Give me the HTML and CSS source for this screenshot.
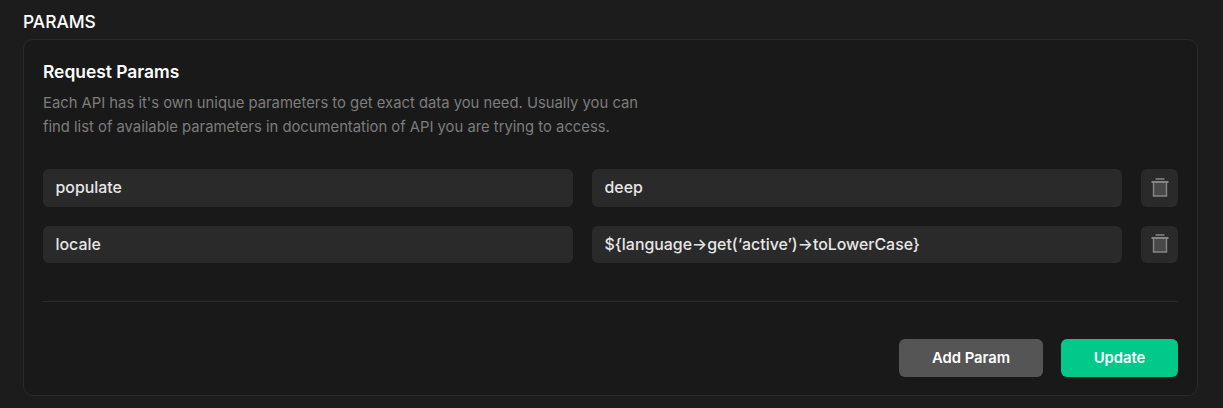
FILE: index.html
```html
<!DOCTYPE html>
<html lang="en">
<head>
<meta charset="utf-8">
<title>Params</title>
<link rel="stylesheet" href="styles.css">
</head>
<body>
<main class="section">
  <h2 class="section-title">PARAMS</h2>
  <section class="card">
    <h3 class="card-title">Request Params</h3>
    <p class="card-desc">Each API has it's own unique parameters to get exact data you need. Usually you can<br>find list of available parameters in documentation of API you are trying to access.</p>
    <div class="rows">
      <div class="row">
        <input class="field" value="populate">
        <input class="field" value="deep">
        <button class="trash" aria-label="Delete">
          <svg width="18" height="20" viewBox="0 0 18 20" fill="none"><rect x="4.5" y="0" width="9" height="2" fill="#6f6f6f"/><rect x="0.5" y="3" width="17" height="2" fill="#858585"/><path d="M2.5 5v13h13V5" fill="#484848" stroke="#858585" stroke-width="1.4"/></svg>
        </button>
      </div>
      <div class="row">
        <input class="field" value="locale">
        <input class="field" value="${language->get(‘active’)->toLowerCase}">
        <button class="trash" aria-label="Delete">
          <svg width="18" height="20" viewBox="0 0 18 20" fill="none"><rect x="4.5" y="0" width="9" height="2" fill="#6f6f6f"/><rect x="0.5" y="3" width="17" height="2" fill="#858585"/><path d="M2.5 5v13h13V5" fill="#484848" stroke="#858585" stroke-width="1.4"/></svg>
        </button>
      </div>
    </div>
    <hr class="divider">
    <div class="actions">
      <button class="btn btn-grey">Add Param</button>
      <button class="btn btn-green">Update</button>
    </div>
  </section>
</main>
</body>
</html>
```
FILE: styles.css
```css
* { box-sizing: border-box; }
html, body { margin: 0; height: 100%; }
body {
  background: #1c1c1c;
  font-family: Inter, "Liberation Sans", sans-serif;
  color: #fff;
  overflow: hidden;
}
.section { padding: 12px 25px 0 23px; }
.section-title {
  margin: 0 0 8px;
  font-size: 17.4px;
  line-height: 19px;
  font-weight: 500;
  color: #fff;
}
.card {
  height: 357px;
  border: 1px solid #2a2a2a;
  border-radius: 10px;
  background: #191919;
  padding: 22px 19px 0;
}
.card-title {
  margin: 0;
  font-size: 17.4px;
  line-height: 20px;
  font-weight: 600;
  color: #fff;
}
.card-desc {
  margin: 9px 0 0;
  font-size: 14.8px;
  line-height: 24px;
  color: #7d7d7d;
}
.rows { margin-top: 30px; display: flex; flex-direction: column; gap: 19px; }
.row { display: grid; grid-template-columns: 1fr 1fr 37px; column-gap: 19px; }
.field {
  width: 100%;
  min-width: 0;
  height: 37.6px;
  border: 0;
  outline: 0;
  border-radius: 6px;
  background: #2a2a2a;
  padding: 0 12.5px;
  font: 500 15.9px Inter, "Liberation Sans", sans-serif;
  color: #e6e6e6;
}
.trash {
  height: 37.6px;
  padding: 0;
  border: 0;
  border-radius: 6px;
  background: #2a2a2a;
  display: flex;
  align-items: center;
  justify-content: center;
}
.divider { margin: 38px 0 0; border: 0; border-top: 1px solid #2a2a2a; }
.actions { margin-top: 37px; display: flex; justify-content: flex-end; gap: 18px; }
.btn {
  height: 38px;
  border: 0;
  border-radius: 6px;
  font: 600 14.8px Inter, "Liberation Sans", sans-serif;
  color: #fff;
}
.btn-grey { width: 144px; background: #555; }
.btn-green { width: 117px; background: #00c98a; }
```
